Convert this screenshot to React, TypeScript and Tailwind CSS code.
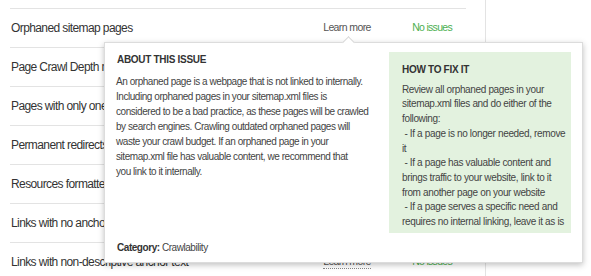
import React from "react";

const rows = [
  "Orphaned sitemap pages",
  "Page Crawl Depth more than 3 clicks",
  "Pages with only one incoming internal link",
  "Permanent redirects",
  "Resources formatted as page link",
  "Links with no anchor text",
  "Links with non-descriptive anchor text",
];

const aboutLines = [
  "An orphaned page is a webpage that is not linked to internally.",
  "Including orphaned pages in your sitemap.xml files is",
  "considered to be a bad practice, as these pages will be crawled",
  "by search engines. Crawling outdated orphaned pages will",
  "waste your crawl budget. If an orphaned page in your",
  "sitemap.xml file has valuable content, we recommend that",
  "you link to it internally.",
];

const fixLines = [
  "Review all orphaned pages in your",
  "sitemap.xml files and do either of the",
  "following:",
  "\u00a0- If a page is no longer needed, remove",
  "it",
  "\u00a0- If a page has valuable content and",
  "brings traffic to your website, link to it",
  "from another page on your website",
  "\u00a0- If a page serves a specific need and",
  "requires no internal linking, leave it as is",
];

export default function App() {
  return (
    <div
      className="relative w-[591px] h-[276px] overflow-hidden bg-white text-[#333]"
      style={{ fontFamily: '"Liberation Sans", Arial, sans-serif' }}
    >
      <div className="w-[486px] h-full border-r border-[#e3e3e3] pl-[10px] pr-[19px] pt-[8px]">
        {rows.map((r, i) => (
          <div
            key={r}
            className="h-[39px] border-t border-[#e3e3e3] flex items-center text-[12px] tracking-[-0.6px] pl-[1px]"
          >
            <span className="flex-1 whitespace-nowrap overflow-hidden">{r}</span>
            <span className="w-[70px] text-center text-[10.5px] tracking-[-0.6px] text-[#555]">
              <span className={i === 0 ? "" : "border-b border-dotted border-[#888] pb-[1px]"}>
                Learn more
              </span>
            </span>
            <span className="w-[84px] text-right pr-[14px] text-[10.5px] tracking-[-0.7px] text-[#4caf50]">
              No issues
            </span>
          </div>
        ))}
      </div>

      <div className="absolute left-[104px] top-[42px] w-[479px] h-[221px] bg-white border border-[#dcdcdc] shadow-[0_2px_6px_rgba(0,0,0,0.25)] flex tracking-[-0.45px]">
        <div className="absolute left-[239px] top-[-5px] w-[9px] h-[9px] rotate-45 bg-white border-l border-t border-[#d6d6d6]" />
        <div className="w-[284px] pl-[11px] pt-[9px] pb-[7px] pr-[8px] flex flex-col text-[10px] leading-[15px] text-[#444]">
          <div className="font-bold text-[#333] text-[10px] pl-[1px] mb-[7px] tracking-[-0.3px]">ABOUT THIS ISSUE</div>
          <div className="whitespace-nowrap">
            {aboutLines.map((l) => (
              <div key={l}>{l}</div>
            ))}
          </div>
          <div className="mt-auto pl-[1px]">
            <span className="font-bold text-[#333]">Category:</span> Crawlability
          </div>
        </div>
        <div className="mt-[9px] w-[182px] h-[181px] bg-[#e3f2df] pl-[13px] pr-[2px] pt-[11px] text-[10px] leading-[14.7px] tracking-[-0.35px] text-[#444]">
          <div className="font-bold text-[#333] mb-[5px] tracking-[-0.3px]">HOW TO FIX IT</div>
          <div className="whitespace-nowrap">
            {fixLines.map((l, i) => (
              <div key={i}>{l}</div>
            ))}
          </div>
        </div>
      </div>
    </div>
  );
}
